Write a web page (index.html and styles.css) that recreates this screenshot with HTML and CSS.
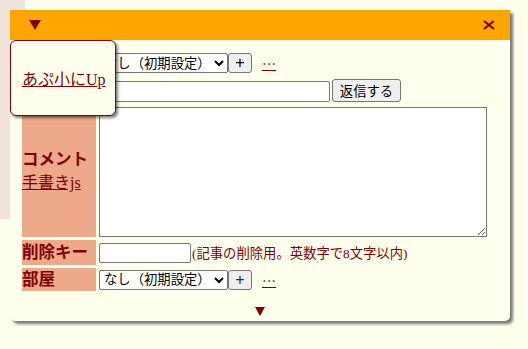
FILE: index.html
```html
<!DOCTYPE html>
<html lang="ja">
  <head>
    <meta charset="UTF-8" />
    <meta name="viewport" content="width=device-width, initial-scale=1.0" />
    <title>返信フォーム</title>
    <link rel="stylesheet" href="styles.css">
  </head>
  <body>
    <div class="side"></div>

    <div class="dialog">
      <div class="bar">
        <svg width="12" height="10" viewBox="0 0 12 10"><polygon points="0,0 12,0 6,10" fill="#800000" /></svg>
        <svg width="12" height="10" viewBox="0 0 12 10"><path d="M1 1 L11 9 M11 1 L1 9" stroke="#800000" stroke-width="2.2" /></svg>
      </div>

      <div class="form">
        <div class="label"></div>
        <div class="field">
          <select class="sel"><option>なし（初期設定）</option></select><button class="plus">+</button><a href="#" class="more-link">…</a>
        </div>

        <div class="label"></div>
        <div class="field">
          <input type="text" class="title" /><button class="send">返信する</button>
        </div>

        <div class="label">
          <b>コメント</b>
          <a href="#">手書きjs</a>
        </div>
        <div class="field">
          <textarea class="comment"></textarea>
        </div>

        <div class="label"><b>削除キー</b></div>
        <div class="field">
          <input type="password" class="key" /><span class="note">(記事の削除用。英数字で8文字以内)</span>
        </div>

        <div class="label"><b>部屋</b></div>
        <div class="field">
          <select class="sel"><option>なし（初期設定）</option></select><button class="plus blue">+</button><a href="#" class="more-link">…</a>
        </div>
      </div>

      <div class="more">
        <svg width="10" height="9" viewBox="0 0 10 9"><polygon points="0,0 10,0 5,9" fill="#800000" /></svg>
      </div>
    </div>

    <div class="popup">
      <a href="#">あぷ小にUp</a>
    </div>
  </body>
</html>
```

FILE: styles.css
```css
body {
  margin: 0;
  background: #ffffee;
  font-family: "Liberation Serif", "Noto Sans CJK JP", serif;
  font-size: 16px;
  color: #800000;
}
a {
  color: #800000;
}
.side {
  width: 25px;
  height: 219px;
  background: #efe3dc;
}
.dialog {
  position: absolute;
  left: 10px;
  top: 10px;
  width: 500px;
  padding-bottom: 5px;
  background: #ffffee;
  border-radius: 0 0 5px 5px;
  box-shadow: 3px 3px 3px #777;
}
.bar {
  height: 30px;
  background: #ffa500;
  display: flex;
  justify-content: space-between;
  align-items: center;
  padding: 0 15px 0 19px;
}
.bar svg {
  display: block;
}
.form {
  display: grid;
  grid-template-columns: 74px 1fr;
  grid-template-rows: 24px 24px 132px 25px 23px;
  gap: 3px;
  padding: 11px 0 0 12px;
}
.label {
  background: #eda98a;
  display: flex;
  flex-direction: column;
  justify-content: center;
  align-items: flex-start;
  line-height: 23px;
}
.label b {
  font-size: 16.5px;
}
.field {
  display: flex;
  align-items: center;
}
input,
select,
button,
textarea {
  font-family: "Liberation Sans", "Noto Sans CJK JP", sans-serif;
  font-size: 13.33px;
  box-sizing: border-box;
  margin: 0;
}
input,
textarea {
  background: #fff;
  border: 1px solid #767676;
}
input {
  border-radius: 2px;
}
.sel {
  width: 129px;
  height: 20px;
  padding: 0;
  line-height: 16px;
}
button {
  background: #efefef;
  border: 1px solid #767676;
  border-radius: 3px;
  padding: 0 6px;
  color: #000;
}
.plus {
  width: 24px;
  height: 20px;
  padding: 0;
  font-size: 16px;
  line-height: 16px;
}
.blue {
  color: #1a2a6c;
}
.more-link {
  margin-left: 10px;
  font-family: "Noto Sans CJK JP", sans-serif;
  font-size: 14px;
  line-height: 1;
}
.title {
  width: 231px;
  height: 21px;
  margin-right: 2px;
  align-self: flex-end;
}
.send {
  width: 69px;
  height: 23px;
  align-self: flex-end;
}
.comment {
  width: 388px;
  height: 130px;
  align-self: flex-end;
  border-radius: 0;
}
.key {
  width: 92px;
  height: 20px;
  margin-right: 1px;
}
.note {
  font-size: 13.33px;
}
.more {
  margin-top: 16px;
}
.more svg {
  display: block;
  margin: 0 auto;
}
.popup {
  position: absolute;
  left: 10px;
  top: 40px;
  width: 93px;
  height: 74px;
  padding-left: 11px;
  border: 1px solid #800000;
  border-radius: 6px;
  background: #ffffee;
  box-shadow: 2px 2px 3px rgba(0, 0, 0, 0.5);
  display: flex;
  align-items: center;
}
```
